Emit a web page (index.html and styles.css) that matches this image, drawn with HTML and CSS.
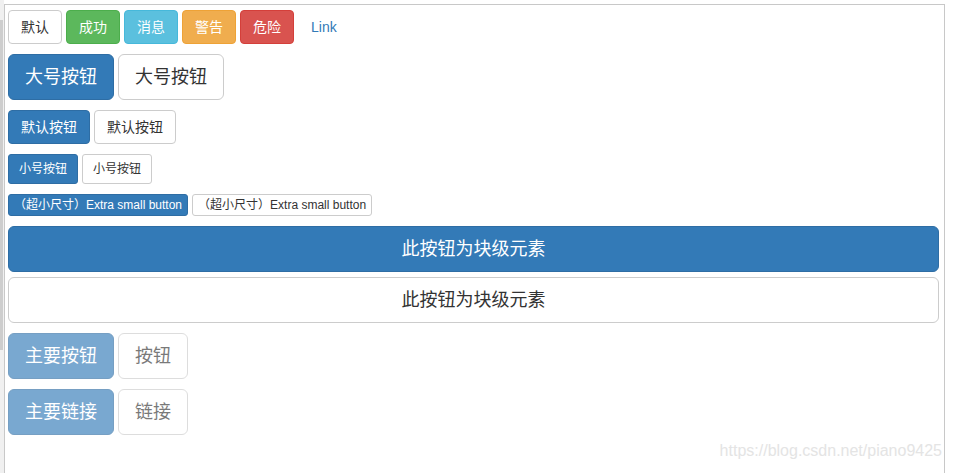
FILE: index.html
```html
<!DOCTYPE html>
<html lang="zh-CN">
<head>
<meta charset="utf-8">
<title>按钮</title>
<link rel="stylesheet" href="styles.css">
</head>
<body>
<div class="page">
  <div class="scrollbar"><div class="thumb"></div></div>
  <div class="frame">
    <div class="row">
      <button class="btn btn-default">默认</button>
      <button class="btn btn-success">成功</button>
      <button class="btn btn-info">消息</button>
      <button class="btn btn-warning">警告</button>
      <button class="btn btn-danger">危险</button>
      <button class="btn btn-link">Link</button>
    </div>
    <div class="row">
      <button class="btn btn-primary btn-lg">大号按钮</button>
      <button class="btn btn-default btn-lg">大号按钮</button>
    </div>
    <div class="row">
      <button class="btn btn-primary">默认按钮</button>
      <button class="btn btn-default">默认按钮</button>
    </div>
    <div class="row">
      <button class="btn btn-primary btn-sm">小号按钮</button>
      <button class="btn btn-default btn-sm">小号按钮</button>
    </div>
    <div class="row">
      <button class="btn btn-primary btn-xs">（超小尺寸）Extra small button</button>
      <button class="btn btn-default btn-xs">（超小尺寸）Extra small button</button>
    </div>
    <div class="block-group">
      <button class="btn btn-primary btn-lg btn-block">此按钮为块级元素</button>
      <button class="btn btn-default btn-lg btn-block">此按钮为块级元素</button>
    </div>
    <div class="row">
      <button class="btn btn-primary btn-lg disabled">主要按钮</button>
      <button class="btn btn-default btn-lg disabled">按钮</button>
    </div>
    <div class="row">
      <a class="btn btn-primary btn-lg disabled">主要链接</a>
      <a class="btn btn-default btn-lg disabled">链接</a>
    </div>
    <div class="watermark">https://blog.csdn.net/piano9425</div>
  </div>
</div>
</body>
</html>
```

FILE: styles.css
```css
html, body {
  margin: 0;
  padding: 0;
  height: 100%;
  background: #fff;
}
body {
  font-family: "Liberation Sans", "Noto Sans CJK SC", sans-serif;
  font-size: 14px;
  line-height: 20px;
  color: #333;
}
.page {
  display: flex;
  height: 473px;
  width: 953px;
  position: relative;
}
.scrollbar {
  width: 4px;
  background: #f0f0f0;
  display: flex;
  flex-direction: column;
}
.thumb {
  margin-top: 20px;
  height: 330px;
  width: 3px;
  background: #cdcdcd;
}
.frame {
  margin-top: 4px;
  width: 931px;
  border-top: 1px solid #c8c8c8;
  border-left: 1px solid #c8c8c8;
  border-right: 1px solid #c8c8c8;
  padding: 5px 5px 0 3px;
  display: flex;
  flex-direction: column;
}
.row {
  display: flex;
  gap: 4px;
  margin-bottom: 10px;
  align-items: flex-start;
}
.block-group {
  display: flex;
  flex-direction: column;
  gap: 5px;
  margin-bottom: 10px;
}
.btn {
  box-sizing: border-box;
  display: inline-block;
  font-family: inherit;
  font-size: 14px;
  line-height: 20px;
  padding: 6px 12px;
  border: 1px solid transparent;
  border-radius: 4px;
  text-align: center;
  white-space: nowrap;
  background: #fff;
  color: #333;
  margin: 0;
  cursor: pointer;
  text-decoration: none;
}
.btn-default { background: #fff; border-color: #ccc; color: #333; }
.btn-primary { background: #337ab7; border-color: #2e6da4; color: #fff; }
.btn-success { background: #5cb85c; border-color: #4cae4c; color: #fff; }
.btn-info { background: #5bc0de; border-color: #46b8da; color: #fff; }
.btn-warning { background: #f0ad4e; border-color: #eea236; color: #fff; }
.btn-danger { background: #d9534f; border-color: #d43f3a; color: #fff; }
.btn-link { background: transparent; border-color: transparent; color: #337ab7; }
.btn-lg {
  font-size: 18px;
  line-height: 24px;
  padding: 10px 16px;
  border-radius: 6px;
}
.btn-sm {
  font-size: 12px;
  line-height: 18px;
  padding: 5px 10px;
  border-radius: 3px;
}
.btn-xs {
  font-size: 12px;
  line-height: 18px;
  padding: 1px 5px;
  border-radius: 3px;
}
.btn-block {
  display: block;
  width: 100%;
}
.disabled {
  opacity: 0.65;
  cursor: not-allowed;
}
.watermark {
  position: absolute;
  right: 11px;
  top: 441px;
  font-size: 16px;
  line-height: 20px;
  color: #e4e4e4;
}
```
